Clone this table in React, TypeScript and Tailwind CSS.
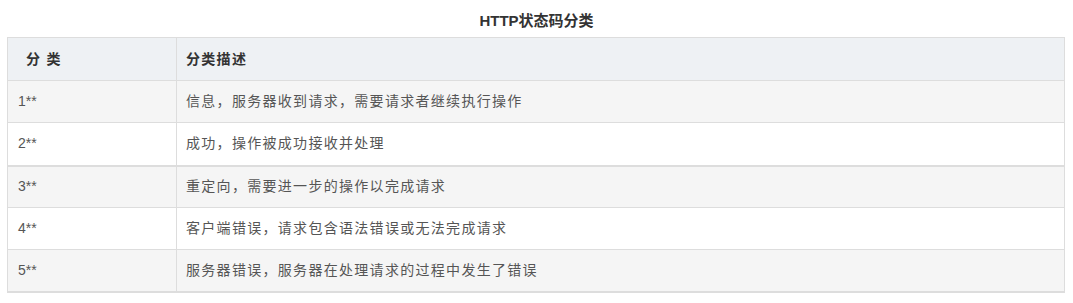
const rows = [
  { code: '1**', desc: '信息，服务器收到请求，需要请求者继续执行操作' },
  { code: '2**', desc: '成功，操作被成功接收并处理' },
  { code: '3**', desc: '重定向，需要进一步的操作以完成请求' },
  { code: '4**', desc: '客户端错误，请求包含语法错误或无法完成请求' },
  { code: '5**', desc: '服务器错误，服务器在处理请求的过程中发生了错误' },
];

export default function App() {
  return (
    <div
      className="w-[1073px] h-[303px] bg-white px-[7px] text-[#333]"
      style={{ fontFamily: '"Liberation Sans", Arial, "Noto Sans CJK SC", sans-serif' }}
    >
      <div className="h-[37px] flex items-center justify-center pt-[6px] text-[15px] font-bold text-[#333]">
        HTTP状态码分类
      </div>
      <table className="w-[1058px] border-collapse border border-[#ddd] border-b-2 text-[14px] tracking-[1.3px]">
        <thead>
          <tr className="bg-[#eef1f4] h-[43px]">
            <th className="w-[169px] border border-[#ddd] pl-[18px] text-left font-bold">分 类</th>
            <th className="border border-[#ddd] pl-[9px] text-left font-bold">分类描述</th>
          </tr>
        </thead>
        <tbody>
          {rows.map((r, i) => (
            <tr
              key={r.code}
              className={
                (i % 2 === 0 ? 'bg-[#f5f5f5] ' : 'bg-white ') +
                (i === 1 ? 'h-[43px] border-b-2 border-[#ddd]' : 'h-[42px]')
              }
            >
              <td className="border border-[#ddd] pl-[10px] text-[#555] tracking-normal">{r.code}</td>
              <td className="border border-[#ddd] pl-[9px] text-[#555]">{r.desc}</td>
            </tr>
          ))}
        </tbody>
      </table>
    </div>
  );
}
